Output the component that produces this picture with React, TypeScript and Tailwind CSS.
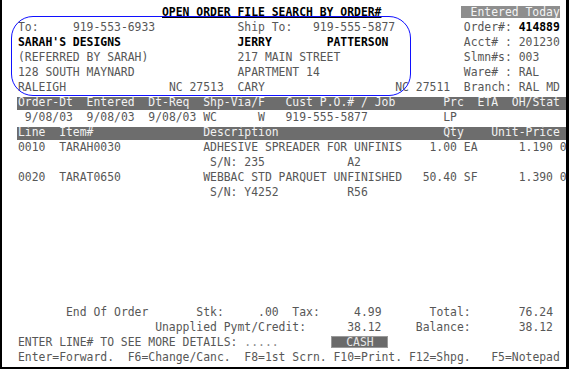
import React from 'react';

type Seg = { c: number; t: string; k?: 'bold' | 'dim' | 'badge' | 'cash' };

// one 5250 screen line: segments are placed by column, padded with spaces
function Line({ segs }: { segs: Seg[] }) {
  let col = 0;
  const out: React.ReactNode[] = [];
  segs.forEach((s, i) => {
    if (s.c > col) out.push(' '.repeat(s.c - col));
    col = s.c + s.t.length;
    if (s.k === 'bold') {
      out.push(<span key={i} className="font-bold text-black">{s.t}</span>);
    } else if (s.k === 'dim') {
      out.push(<span key={i} className="text-[#8a8a8a]">{s.t}</span>);
    } else if (s.k === 'cash') {
      out.push(
        <span key={i} className="inline-block h-[12px] leading-[10px] -ml-[2px] border border-[#9a9a9a] bg-[#6a6a6a] text-[#e6e6e6]">
          {s.t}
        </span>
      );
    } else {
      out.push(<span key={i}>{s.t}</span>);
    }
  });
  return <div className="h-[15px] leading-[15px] whitespace-pre">{out}</div>;
}

function Bar({ segs }: { segs: Seg[] }) {
  let col = 0;
  const out: React.ReactNode[] = [];
  segs.forEach((s, i) => {
    if (s.c > col) out.push(' '.repeat(s.c - col));
    col = s.c + s.t.length;
    out.push(<span key={i}>{s.t}</span>);
  });
  return (
    <div className="h-[15px] pt-[2px]">
      <div className="h-[13px] -ml-px pl-px leading-[11px] whitespace-pre bg-[#6d6d6d] text-[#f2f2f2]">{out}</div>
    </div>
  );
}

export default function App() {
  return (
    <div className="relative w-[569px] h-[369px] bg-white overflow-hidden font-['DejaVu_Sans_Mono',monospace] text-[11.4px] text-[#575757]">
      <div className="h-full border-l-2 border-r-[3px] border-b-2 border-black pt-[5px] pl-[16px]">
        <div className="h-[15px] leading-[15px] whitespace-pre">
          {' '.repeat(21)}
          <span className="font-bold text-black underline underline-offset-[1px]">OPEN ORDER FILE SEARCH BY ORDER#</span>
          {' '.repeat(12)}
          <span className="inline-block h-[12px] leading-[12px] -ml-[3px] pl-[3px] bg-[#8e8e8e] text-[#f4f4f4]"> Entered Today</span>
        </div>
        <Line
          segs={[
            { c: 0, t: 'To:' },
            { c: 8, t: '919-553-6933' },
            { c: 32, t: 'Ship To:' },
            { c: 43, t: '919-555-5877' },
            { c: 65, t: 'Order#:' },
            { c: 73, t: '414889', k: 'bold' },
          ]}
        />
        <Line
          segs={[
            { c: 0, t: "SARAH'S DESIGNS", k: 'bold' },
            { c: 32, t: 'JERRY', k: 'bold' },
            { c: 45, t: 'PATTERSON', k: 'bold' },
            { c: 65, t: 'Acct# :' },
            { c: 73, t: '201230' },
          ]}
        />
        <Line
          segs={[
            { c: 0, t: '(REFERRED BY SARAH)' },
            { c: 32, t: '217 MAIN STREET' },
            { c: 65, t: 'Slmn#s:' },
            { c: 73, t: '003' },
          ]}
        />
        <Line
          segs={[
            { c: 0, t: '128 SOUTH MAYNARD' },
            { c: 32, t: 'APARTMENT 14' },
            { c: 65, t: 'Ware# :' },
            { c: 73, t: 'RAL' },
          ]}
        />
        <Line
          segs={[
            { c: 0, t: 'RALEIGH' },
            { c: 22, t: 'NC 27513' },
            { c: 32, t: 'CARY' },
            { c: 55, t: 'NC 27511' },
            { c: 65, t: 'Branch:' },
            { c: 73, t: 'RAL MD' },
          ]}
        />
        <Bar
          segs={[
            { c: 0, t: 'Order-Dt' },
            { c: 10, t: 'Entered' },
            { c: 19, t: 'Dt-Req' },
            { c: 27, t: 'Shp-Via/F' },
            { c: 39, t: 'Cust P.O.# / Job' },
            { c: 62, t: 'Prc' },
            { c: 67, t: 'ETA' },
            { c: 72, t: 'OH/Stat' },
          ]}
        />
        <Line
          segs={[
            { c: 1, t: '9/08/03' },
            { c: 10, t: '9/08/03' },
            { c: 19, t: '9/08/03' },
            { c: 27, t: 'WC' },
            { c: 35, t: 'W' },
            { c: 39, t: '919-555-5877' },
            { c: 62, t: 'LP' },
          ]}
        />
        <Bar
          segs={[
            { c: 0, t: 'Line' },
            { c: 6, t: 'Item#' },
            { c: 27, t: 'Description' },
            { c: 62, t: 'Qty' },
            { c: 69, t: 'Unit-Price' },
          ]}
        />
        <Line
          segs={[
            { c: 0, t: '0010' },
            { c: 6, t: 'TARAH0030' },
            { c: 27, t: 'ADHESIVE SPREADER FOR UNFINIS' },
            { c: 60, t: '1.00' },
            { c: 65, t: 'EA' },
            { c: 73, t: '1.190' },
            { c: 79, t: '0' },
          ]}
        />
        <Line
          segs={[
            { c: 28, t: 'S/N: 235' },
            { c: 48, t: 'A2' },
          ]}
        />
        <Line
          segs={[
            { c: 0, t: '0020' },
            { c: 6, t: 'TARAT0650' },
            { c: 27, t: 'WEBBAC STD PARQUET UNFINISHED' },
            { c: 59, t: '50.40' },
            { c: 65, t: 'SF' },
            { c: 73, t: '1.390' },
            { c: 79, t: '0' },
          ]}
        />
        <Line
          segs={[
            { c: 28, t: 'S/N: Y4252' },
            { c: 48, t: 'R56' },
          ]}
        />
        <div className="h-[105px]" />
        <Line
          segs={[
            { c: 7, t: 'End Of Order' },
            { c: 26, t: 'Stk:' },
            { c: 35, t: '.00' },
            { c: 40, t: 'Tax:' },
            { c: 49, t: '4.99' },
            { c: 60, t: 'Total:' },
            { c: 73, t: '76.24' },
          ]}
        />
        <Line
          segs={[
            { c: 20, t: 'Unapplied Pymt/Credit:' },
            { c: 48, t: '38.12' },
            { c: 58, t: 'Balance:' },
            { c: 73, t: '38.12' },
          ]}
        />
        <Line
          segs={[
            { c: 0, t: 'ENTER LINE# TO SEE MORE DETAILS:' },
            { c: 33, t: '.....', k: 'dim' },
            { c: 46, t: '  CASH  ', k: 'cash' },
          ]}
        />
        <Line
          segs={[
            { c: 0, t: 'Enter=Forward.' },
            { c: 16, t: 'F6=Change/Canc.' },
            { c: 33, t: 'F8=1st Scrn.' },
            { c: 46, t: 'F10=Print.' },
            { c: 57, t: 'F12=Shpg.' },
            { c: 69, t: 'F5=Notepad' },
          ]}
        />
      </div>
      {/* blue hand-drawn highlight over the address block */}
      <div className="absolute left-[11px] top-[16px] w-[400px] h-[80px] rounded-[22px] border border-[#1010ff] pointer-events-none" />
    </div>
  );
}
